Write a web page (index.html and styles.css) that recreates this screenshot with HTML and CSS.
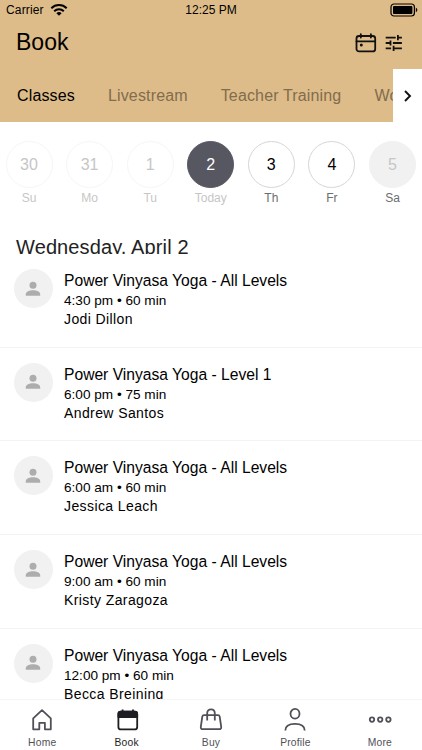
FILE: index.html
```html
<!DOCTYPE html>
<html lang="en">
<head>
  <meta charset="UTF-8">
  <meta name="viewport" content="width=device-width, initial-scale=1">
  <title>Book</title>
  <link rel="stylesheet" href="styles.css">
</head>
<body>
  <header class="header">
    <div class="status-bar">
      <div class="carrier">
        <span>Carrier</span>
        <svg width="18" height="14" viewBox="0 0 18 14" fill="none" stroke="#000" stroke-width="2">
          <path d="M1.3 5.2a11 11 0 0 1 15.4 0M4.2 8.2a6.9 6.9 0 0 1 9.6 0"/>
          <path d="M9 12.8L6.4 10.3a3.7 3.7 0 0 1 5.2 0z" fill="#000" stroke="none"/>
        </svg>
      </div>
      <span class="time">12:25 PM</span>
      <svg class="battery" width="28" height="14" viewBox="0 0 28 14">
        <rect x="1" y="1" width="23.4" height="12" rx="3" fill="none" stroke="#000" stroke-width="1.2"/>
        <rect x="3" y="3" width="19.4" height="8" rx="1" fill="#000"/>
        <path d="M25.8 4.8c2 .7 2 3.7 0 4.4z" fill="#000"/>
      </svg>
    </div>
    <div class="title-bar">
      <h1>Book</h1>
      <div class="actions">
        <svg width="22" height="20" viewBox="0 0 22 20" fill="none" stroke="#111" stroke-width="1.8" stroke-linecap="round">
          <rect x="1.5" y="3" width="18.7" height="15.4" rx="2.5"/>
          <path d="M1.5 8.3h18.7M5.8 1.2v3.4M15.9 1.2v3.4"/>
          <circle cx="6.3" cy="12" r="1.5" fill="#111" stroke="none"/>
        </svg>
        <svg width="18" height="18" viewBox="0 0 18 18" fill="none" stroke="#111" stroke-width="1.8">
          <path d="M.7 3.6h10M12.9 1v5.2M12.9 3.6h4M.7 9h4.6M5.5 6.4v5.2M7.9 9h9M.7 14.4h5.4M8.6 11.8V17M8.6 14.4h8.3"/>
        </svg>
      </div>
    </div>
    <nav class="tabs">
      <span class="tab active">Classes</span>
      <span class="tab">Livestream</span>
      <span class="tab">Teacher Training</span>
      <span class="tab">Workshops</span>
      <button class="tabs-next" aria-label="Next">
        <svg width="8" height="12" viewBox="0 0 8 12" fill="none" stroke="#111" stroke-width="1.9">
          <path d="M1 1l5 5-5 5"/>
        </svg>
      </button>
    </nav>
  </header>

  <section class="days">
    <div class="day past"><span class="num">30</span><span class="name">Su</span></div>
    <div class="day past"><span class="num">31</span><span class="name">Mo</span></div>
    <div class="day past"><span class="num">1</span><span class="name">Tu</span></div>
    <div class="day today"><span class="num">2</span><span class="name">Today</span></div>
    <div class="day"><span class="num">3</span><span class="name">Th</span></div>
    <div class="day"><span class="num">4</span><span class="name">Fr</span></div>
    <div class="day empty"><span class="num">5</span><span class="name">Sa</span></div>
  </section>

  <h2 class="date">Wednesday, April 2</h2>

  <main class="list">
    <article class="item">
      <div class="avatar"><svg width="16" height="16" viewBox="0 0 16 16"><circle cx="8" cy="4.2" r="3.5"/><path d="M.8 14.8v-1.6C.8 10.6 4.6 9.2 8 9.2s7.2 1.4 7.2 4v1.6z"/></svg></div>
      <div class="info">
        <h3>Power Vinyasa Yoga - All Levels</h3>
        <p class="when">4:30 pm • 60 min</p>
        <p class="teacher">Jodi Dillon</p>
      </div>
    </article>
    <article class="item">
      <div class="avatar"><svg width="16" height="16" viewBox="0 0 16 16"><circle cx="8" cy="4.2" r="3.5"/><path d="M.8 14.8v-1.6C.8 10.6 4.6 9.2 8 9.2s7.2 1.4 7.2 4v1.6z"/></svg></div>
      <div class="info">
        <h3>Power Vinyasa Yoga - Level 1</h3>
        <p class="when">6:00 pm • 75 min</p>
        <p class="teacher">Andrew Santos</p>
      </div>
    </article>
    <article class="item">
      <div class="avatar"><svg width="16" height="16" viewBox="0 0 16 16"><circle cx="8" cy="4.2" r="3.5"/><path d="M.8 14.8v-1.6C.8 10.6 4.6 9.2 8 9.2s7.2 1.4 7.2 4v1.6z"/></svg></div>
      <div class="info">
        <h3>Power Vinyasa Yoga - All Levels</h3>
        <p class="when">6:00 am • 60 min</p>
        <p class="teacher">Jessica Leach</p>
      </div>
    </article>
    <article class="item">
      <div class="avatar"><svg width="16" height="16" viewBox="0 0 16 16"><circle cx="8" cy="4.2" r="3.5"/><path d="M.8 14.8v-1.6C.8 10.6 4.6 9.2 8 9.2s7.2 1.4 7.2 4v1.6z"/></svg></div>
      <div class="info">
        <h3>Power Vinyasa Yoga - All Levels</h3>
        <p class="when">9:00 am • 60 min</p>
        <p class="teacher">Kristy Zaragoza</p>
      </div>
    </article>
    <article class="item">
      <div class="avatar"><svg width="16" height="16" viewBox="0 0 16 16"><circle cx="8" cy="4.2" r="3.5"/><path d="M.8 14.8v-1.6C.8 10.6 4.6 9.2 8 9.2s7.2 1.4 7.2 4v1.6z"/></svg></div>
      <div class="info">
        <h3>Power Vinyasa Yoga - All Levels</h3>
        <p class="when">12:00 pm • 60 min</p>
        <p class="teacher">Becca Breining</p>
      </div>
    </article>
  </main>

  <nav class="bottom-nav">
    <a class="nav-item">
      <svg width="24" height="24" viewBox="0 0 24 24">
        <path d="M3.2 10.4L12 2.2l8.8 8.2v10.9h-5.9v-6.5H9.3v6.5H3.2z"/>
      </svg>
      <span>Home</span>
    </a>
    <a class="nav-item active">
      <svg width="24" height="24" viewBox="0 0 24 24">
        <rect x="3.4" y="3.6" width="18.8" height="17.8" rx="2.5"/>
        <path class="fill" d="M3.4 9V6c0-1.5 1-2.4 2.5-2.4h13.8c1.5 0 2.5.9 2.5 2.4v3z"/>
        <path d="M7.6 1.6v3M18 1.6v3"/>
      </svg>
      <span>Book</span>
    </a>
    <a class="nav-item">
      <svg width="24" height="24" viewBox="0 0 24 24">
        <path d="M5 7.2h14c1 0 1.5.4 1.7 1.4l1.5 10.2c.2 1.6-.6 2.4-2.2 2.4H4c-1.6 0-2.4-.8-2.2-2.4L3.3 8.6c.2-1 .7-1.4 1.7-1.4zM8.2 12.400V5.200c0-2.400 1.500-3.900 3.800-3.900s3.800 1.500 3.800 3.900v7.200"/>
      </svg>
      <span>Buy</span>
    </a>
    <a class="nav-item">
      <svg width="24" height="24" viewBox="0 0 24 24">
        <ellipse cx="12" cy="5.8" rx="4.5" ry="4.9"/>
        <path d="M2.3 22.5c0-4.2 3.7-6.7 9.7-6.7s9.7 2.5 9.7 6.7"/>
      </svg>
      <span>Profile</span>
    </a>
    <a class="nav-item">
      <svg width="24" height="24" viewBox="0 0 24 24">
        <circle cx="4" cy="11.6" r="2.2"/><circle cx="12.2" cy="11.6" r="2.2"/><circle cx="20.4" cy="11.6" r="2.2"/>
      </svg>
      <span>More</span>
    </a>
  </nav>
</body>
</html>
```
FILE: styles.css
```css
* {
  box-sizing: border-box;
}

body {
  margin: 0;
  height: 750px;
  display: flex;
  flex-direction: column;
  overflow: hidden;
  background: #fff;
  color: #000;
  font-family: "Liberation Sans", Arial, sans-serif;
}

h1, h2, h3, p {
  margin: 0;
  font-weight: normal;
}

svg {
  display: block;
  flex-shrink: 0;
}

.header {
  height: 122px;
  flex-shrink: 0;
  background: #debc89;
}

.status-bar {
  height: 20px;
  display: grid;
  grid-template-columns: 1fr auto 1fr;
  align-items: center;
  padding: 0 4px 0 6px;
  font-size: 12px;
}

.carrier {
  display: flex;
  align-items: center;
  gap: 6px;
  letter-spacing: 0.15px;
}

.time {
  margin-right: 2px;
}

.battery {
  justify-self: end;
}

.title-bar {
  height: 49px;
  display: flex;
  align-items: center;
  justify-content: space-between;
  padding: 0 19px 4px 16px;
}

.title-bar h1 {
  font-size: 23px;
}

.actions {
  display: flex;
  align-items: center;
  gap: 8px;
}

.tabs {
  height: 53px;
  display: flex;
  align-items: center;
  gap: 33px;
  padding: 1px 0 0 17px;
  position: relative;
  overflow: hidden;
  font-size: 16px;
  letter-spacing: 0.15px;
  white-space: nowrap;
}

.tab {
  color: #816c4e;
}

.tab.active {
  color: #000;
}

.tabs-next {
  position: absolute;
  top: 0;
  right: 0;
  width: 29px;
  height: 53px;
  padding: 0 0 0 11px;
  border: none;
  background: #fff;
}

.days {
  display: flex;
  justify-content: space-between;
  padding: 19px 6px 0 5.5px;
  flex-shrink: 0;
}

.day {
  width: 47px;
  display: flex;
  flex-direction: column;
  align-items: center;
}

.num {
  width: 47px;
  height: 47px;
  display: flex;
  align-items: center;
  justify-content: center;
  border: 1px solid #d6d6d6;
  border-radius: 50%;
  font-size: 16px;
}

.name {
  margin-top: 3px;
  font-size: 12px;
  line-height: 15px;
  color: #6d6d6d;
}

.past .num {
  border-color: #f6f6f6;
  color: #c6c6c6;
}

.past .name,
.today .name {
  color: #c6c6c6;
}

.today .num {
  border-color: #565761;
  background: #565761;
  color: #fff;
}

.empty .num {
  border-color: #f1f1f1;
  background: #f1f1f1;
  color: #c6c6c6;
}

.date {
  height: 20px;
  margin-top: 28px;
  padding-left: 16px;
  overflow: hidden;
  flex-shrink: 0;
  font-size: 20px;
  line-height: 26px;
  letter-spacing: 0.12px;
  color: #222;
}

.list {
  flex: 1;
  min-height: 0;
  overflow: hidden;
}

.item {
  height: 93.7px;
  display: flex;
  gap: 11.5px;
  padding: 15px 14px 0 13.5px;
  border-bottom: 1px solid #f3f3f3;
}

.avatar {
  width: 39px;
  height: 39px;
  display: flex;
  align-items: center;
  justify-content: center;
  border-radius: 50%;
  background: #f1f1f1;
  fill: #adadad;
}

.info h3 {
  margin-top: 2px;
  font-size: 15.65px;
  line-height: 20px;
}

.when {
  font-size: 13.6px;
  line-height: 19px;
}

.teacher {
  font-size: 14px;
  line-height: 19px;
  letter-spacing: 0.4px;
}

.bottom-nav {
  height: 51px;
  display: flex;
  flex-shrink: 0;
  border-top: 1px solid #f5f5f5;
  background: #fff;
}

.nav-item {
  flex: 1;
  display: flex;
  flex-direction: column;
  align-items: center;
  padding-top: 8px;
  font-size: 10.3px;
  line-height: 12px;
  letter-spacing: 0.2px;
  color: #4f5058;
}

.nav-item svg {
  fill: none;
  stroke: currentColor;
  stroke-width: 1.8;
  stroke-linejoin: round;
}

.nav-item span {
  margin-top: 5px;
}

.nav-item.active {
  color: #1d1e24;
}

.nav-item .fill {
  fill: currentColor;
}
```
